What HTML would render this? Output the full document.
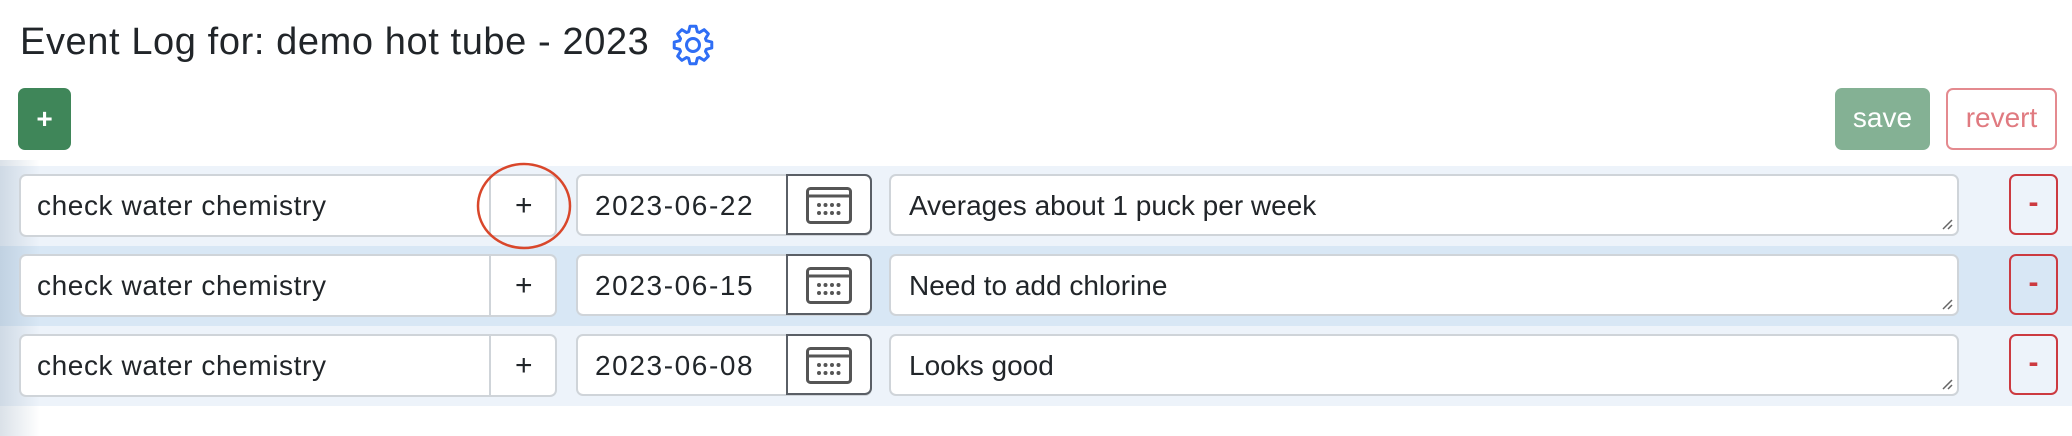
<!DOCTYPE html>
<html><head><meta charset="utf-8"><style>
*{box-sizing:border-box;margin:0;padding:0}
body{width:2072px;height:436px;overflow:hidden;background:#fff;font-family:"Liberation Sans",Arial,sans-serif;color:#212529;position:relative}
.a{position:absolute}
.shade{left:0;top:160px;width:40px;height:276px;background:linear-gradient(to right,rgba(150,170,190,.35),rgba(150,170,190,0))}
.band{left:0;width:2072px;height:80px}
.box{position:absolute;background:#fff;border:2px solid #cfd4d9;border-radius:7px;font-size:28px;line-height:59px;white-space:nowrap}
.nm{letter-spacing:.6px}
.dt{letter-spacing:1.6px}
.cal{position:absolute;border:2px solid #5a5f66;border-radius:0 7px 7px 0;background:#fff}
.minus{position:absolute;border:2px solid #cc3a40;border-radius:7px;color:#cc3a40;text-align:center;font-size:30px;line-height:54px;font-weight:bold}
.grip{position:absolute;right:4px;bottom:4px;width:12px;height:12px}
</style></head><body>
<div class="a" style="left:20px;top:17px;font-size:38px;line-height:50px;letter-spacing:.6px;color:#212529;white-space:nowrap">Event Log for: demo hot tube - 2023</div>
<svg class="a" style="left:671px;top:23px" width="44" height="44" viewBox="0 0 44 44"><path fill="none" stroke="#2f6ef5" stroke-width="3" stroke-linejoin="round" d="M40.77 19.03L40.77 24.97L35.31 26.33L34.47 28.36L37.37 33.17L33.17 37.37L28.36 34.47L26.33 35.31L24.97 40.77L19.03 40.77L17.67 35.31L15.64 34.47L10.83 37.37L6.63 33.17L9.53 28.36L8.69 26.33L3.23 24.97L3.23 19.03L8.69 17.67L9.53 15.64L6.63 10.83L10.83 6.63L15.64 9.53L17.67 8.69L19.03 3.23L24.97 3.23L26.33 8.69L28.36 9.53L33.17 6.63L37.37 10.83L34.47 15.64L35.31 17.67Z"/><circle cx="22" cy="22" r="6.5" fill="none" stroke="#2f6ef5" stroke-width="3"/></svg>
<div class="a" style="left:18px;top:88px;width:53px;height:62px;background:#3f8659;border-radius:7px;color:#fff;font-size:28px;font-weight:bold;text-align:center;line-height:62px">+</div>
<div class="a" style="left:1835px;top:88px;width:95px;height:62px;background:#84b194;border-radius:7px;color:#fff;font-size:28px;text-align:center;line-height:60px">save</div>
<div class="a" style="left:1946px;top:88px;width:111px;height:62px;border:2px solid #e48a8f;border-radius:7px;color:#e07a80;font-size:28px;text-align:center;line-height:56px">revert</div>

<div class="a band" style="top:166px;background:#edf3fa"></div>
<div class="a band" style="top:246px;background:#d8e7f5"></div>
<div class="a band" style="top:326px;background:#edf3fa"></div>
<div class="a shade"></div>

<div class="a" style="left:0;top:174px;width:2072px;height:64px">
 <div class="box nm" style="left:19px;top:0;width:538px;height:63px;padding-left:16px">check water chemistry<div class="a" style="left:468px;top:0;width:2px;height:59px;background:#cfd4d9"></div><div class="a" style="left:470px;top:0;width:66px;text-align:center;font-size:30px">+</div></div>
 <div class="box dt" style="left:576px;top:0;width:296px;height:62px;padding-left:17px">2023-06-22</div>
 <div class="cal" style="left:786px;top:0;width:86px;height:61px"><svg class="a" style="left:18px;top:11px" width="46" height="37" viewBox="0 0 46 37"><rect x="1.5" y="1.5" width="43" height="34" rx="3" fill="none" stroke="#555" stroke-width="3"/><line x1="1.5" y1="9" x2="44.5" y2="9" stroke="#555" stroke-width="3"/><g fill="#555"><circle cx="13" cy="18" r="2"/><circle cx="19.5" cy="18" r="2"/><circle cx="26" cy="18" r="2"/><circle cx="32.5" cy="18" r="2"/><circle cx="13" cy="26" r="2"/><circle cx="19.5" cy="26" r="2"/><circle cx="26" cy="26" r="2"/><circle cx="32.5" cy="26" r="2"/></g></svg></div>
 <div class="box" style="left:889px;top:0;width:1070px;height:62px;padding-left:18px">Averages about 1 puck per week<svg class="grip" viewBox="0 0 12 12"><path d="M11 2L2 11M11 7L7 11" stroke="#666" stroke-width="1.5"/></svg></div>
 <div class="minus" style="left:2009px;top:0;width:49px;height:61px">-</div>
</div>
<div class="a" style="left:0;top:254px;width:2072px;height:64px">
 <div class="box nm" style="left:19px;top:0;width:538px;height:63px;padding-left:16px">check water chemistry<div class="a" style="left:468px;top:0;width:2px;height:59px;background:#cfd4d9"></div><div class="a" style="left:470px;top:0;width:66px;text-align:center;font-size:30px">+</div></div>
 <div class="box dt" style="left:576px;top:0;width:296px;height:62px;padding-left:17px">2023-06-15</div>
 <div class="cal" style="left:786px;top:0;width:86px;height:61px"><svg class="a" style="left:18px;top:11px" width="46" height="37" viewBox="0 0 46 37"><rect x="1.5" y="1.5" width="43" height="34" rx="3" fill="none" stroke="#555" stroke-width="3"/><line x1="1.5" y1="9" x2="44.5" y2="9" stroke="#555" stroke-width="3"/><g fill="#555"><circle cx="13" cy="18" r="2"/><circle cx="19.5" cy="18" r="2"/><circle cx="26" cy="18" r="2"/><circle cx="32.5" cy="18" r="2"/><circle cx="13" cy="26" r="2"/><circle cx="19.5" cy="26" r="2"/><circle cx="26" cy="26" r="2"/><circle cx="32.5" cy="26" r="2"/></g></svg></div>
 <div class="box" style="left:889px;top:0;width:1070px;height:62px;padding-left:18px">Need to add chlorine<svg class="grip" viewBox="0 0 12 12"><path d="M11 2L2 11M11 7L7 11" stroke="#666" stroke-width="1.5"/></svg></div>
 <div class="minus" style="left:2009px;top:0;width:49px;height:61px">-</div>
</div>
<div class="a" style="left:0;top:334px;width:2072px;height:64px">
 <div class="box nm" style="left:19px;top:0;width:538px;height:63px;padding-left:16px">check water chemistry<div class="a" style="left:468px;top:0;width:2px;height:59px;background:#cfd4d9"></div><div class="a" style="left:470px;top:0;width:66px;text-align:center;font-size:30px">+</div></div>
 <div class="box dt" style="left:576px;top:0;width:296px;height:62px;padding-left:17px">2023-06-08</div>
 <div class="cal" style="left:786px;top:0;width:86px;height:61px"><svg class="a" style="left:18px;top:11px" width="46" height="37" viewBox="0 0 46 37"><rect x="1.5" y="1.5" width="43" height="34" rx="3" fill="none" stroke="#555" stroke-width="3"/><line x1="1.5" y1="9" x2="44.5" y2="9" stroke="#555" stroke-width="3"/><g fill="#555"><circle cx="13" cy="18" r="2"/><circle cx="19.5" cy="18" r="2"/><circle cx="26" cy="18" r="2"/><circle cx="32.5" cy="18" r="2"/><circle cx="13" cy="26" r="2"/><circle cx="19.5" cy="26" r="2"/><circle cx="26" cy="26" r="2"/><circle cx="32.5" cy="26" r="2"/></g></svg></div>
 <div class="box" style="left:889px;top:0;width:1070px;height:62px;padding-left:18px">Looks good<svg class="grip" viewBox="0 0 12 12"><path d="M11 2L2 11M11 7L7 11" stroke="#666" stroke-width="1.5"/></svg></div>
 <div class="minus" style="left:2009px;top:0;width:49px;height:61px">-</div>
</div>
<svg class="a" style="left:474px;top:161px" width="100" height="90"><ellipse cx="50" cy="45" rx="46" ry="42" fill="none" stroke="#d9472b" stroke-width="2.5"/></svg>
</body></html>
